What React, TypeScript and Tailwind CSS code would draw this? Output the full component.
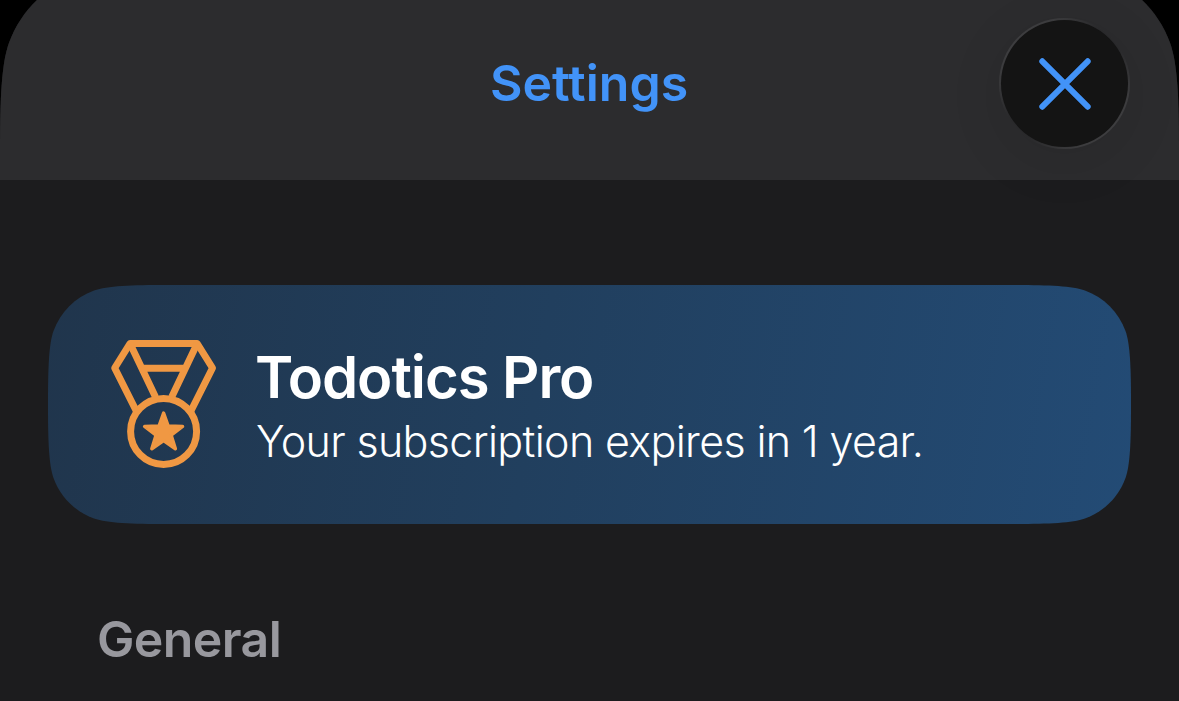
interface MedalIconProps {
  className?: string;
}

function MedalIcon({ className }: MedalIconProps) {
  return (
    <svg viewBox="0 0 112 136" fill="none" stroke="currentColor" strokeWidth="7" strokeLinejoin="round" className={className}>
      {/* Ribbon */}
      <path d="M28.3 75 L6.7 32 L22 7.5 H89.2 L104.5 32 L82.9 75" />
      <path d="M22 7.5 L47.5 61 M89.2 7.5 L63.7 61 M33 32.3 H78" />
      {/* Medal */}
      <circle cx="55.6" cy="95.4" r="33" />
      <path
        d="M55.6 77 L60.2 90 L74.6 90.5 L63.2 99.2 L67.4 112.8 L55.6 104.6 L43.8 112.8 L48 99.2 L36.6 90.5 L51 90 Z"
        fill="currentColor"
        strokeWidth="3.4"
      />
    </svg>
  );
}

function CloseButton() {
  return (
    <button
      aria-label="Close"
      className="h-[131px] w-[131px] rounded-full bg-[linear-gradient(135deg,#404042_0%,#3c3c3e_20%,#29292b_42%,#29292b_58%,#3c3c3e_80%,#404042_100%)] p-[2px] shadow-[0_12px_52px_4px_rgba(0,0,0,0.08)]"
    >
      <span className="flex h-full w-full items-center justify-center rounded-full bg-[#141414]">
        <svg viewBox="0 0 54 54" className="h-[54px] w-[54px] text-[#4293f8]" fill="none" stroke="currentColor" strokeWidth="6" strokeLinecap="round">
          <path d="M4.3 4.3 L49.7 49.7 M49.7 4.3 L4.3 49.7" />
        </svg>
      </span>
    </button>
  );
}

function ProCard() {
  return (
    <div className="flex h-[239px] w-[1083px] items-center bg-[linear-gradient(100deg,#20354c_0%,#213f5e_45%,#234b75_100%)] pl-[60px] [clip-path:path('M0_119C0_84_0.8_59.2_5.5_46.1C12.3_27.2_27.2_12.3_46.1_5.5C59.2_0.8_84_0_119_0H964C999_0_1023.8_0.8_1036.9_5.5C1055.8_12.3_1070.7_27.2_1077.5_46.1C1082.2_59.2_1083_84_1083_119V120C1083_155_1082.2_179.8_1077.5_192.9C1070.7_211.8_1055.8_226.7_1036.9_233.5C1023.8_238.2_999_239_964_239H119C84_239_59.2_238.2_46.1_233.5C27.2_226.7_12.3_211.8_5.5_192.9C0.8_179.8_0_155_0_120Z')]">
      <MedalIcon className="mb-[2px] h-[136px] w-[112px] shrink-0 text-[#f09843]" />
      <div className="ml-[35px] whitespace-nowrap text-white">
        <h2 className="text-[58px] font-semibold leading-[72px] tracking-[-1.05px]">Todotics Pro</h2>
        <p className="ml-px text-[43px] font-light leading-[56px] tracking-[-0.66px]">Your subscription expires in 1 year.</p>
      </div>
    </div>
  );
}

export default function App() {
  return (
    <div className="h-[701px] w-[1179px] overflow-hidden bg-black font-['Inter','Liberation_Sans',sans-serif]">
      <div className="h-full bg-[#1c1c1e] [clip-path:path('M0_701V150.4C0_97.6_1.5_63.5_9_42.8C20.3_11.7_44.7_-12.7_75.8_-24C104.2_-33_130.6_-33_183.4_-33H995.6C1048.4_-33_1074.8_-33_1103.2_-24C1134.3_-12.7_1158.7_11.7_1170_42.8C1177.5_63.5_1179_97.6_1179_150.4V701Z')]">
        <header className="grid h-[180px] grid-cols-[1fr_auto_1fr] bg-[#2c2c2e] pr-[49px] pt-[18px]">
          <h1 className="col-start-2 ml-[48px] mt-[35px] text-[50px] font-semibold leading-[60px] text-[#4293f8]">Settings</h1>
          <div className="flex justify-end">
            <CloseButton />
          </div>
        </header>

        <main className="pl-12 pt-[105px]">
          <ProCard />
          <h3 className="ml-[49px] mt-[85px] text-[50px] font-semibold leading-[60px] tracking-[-0.6px] text-[#98989e]">General</h3>
        </main>
      </div>
    </div>
  );
}
